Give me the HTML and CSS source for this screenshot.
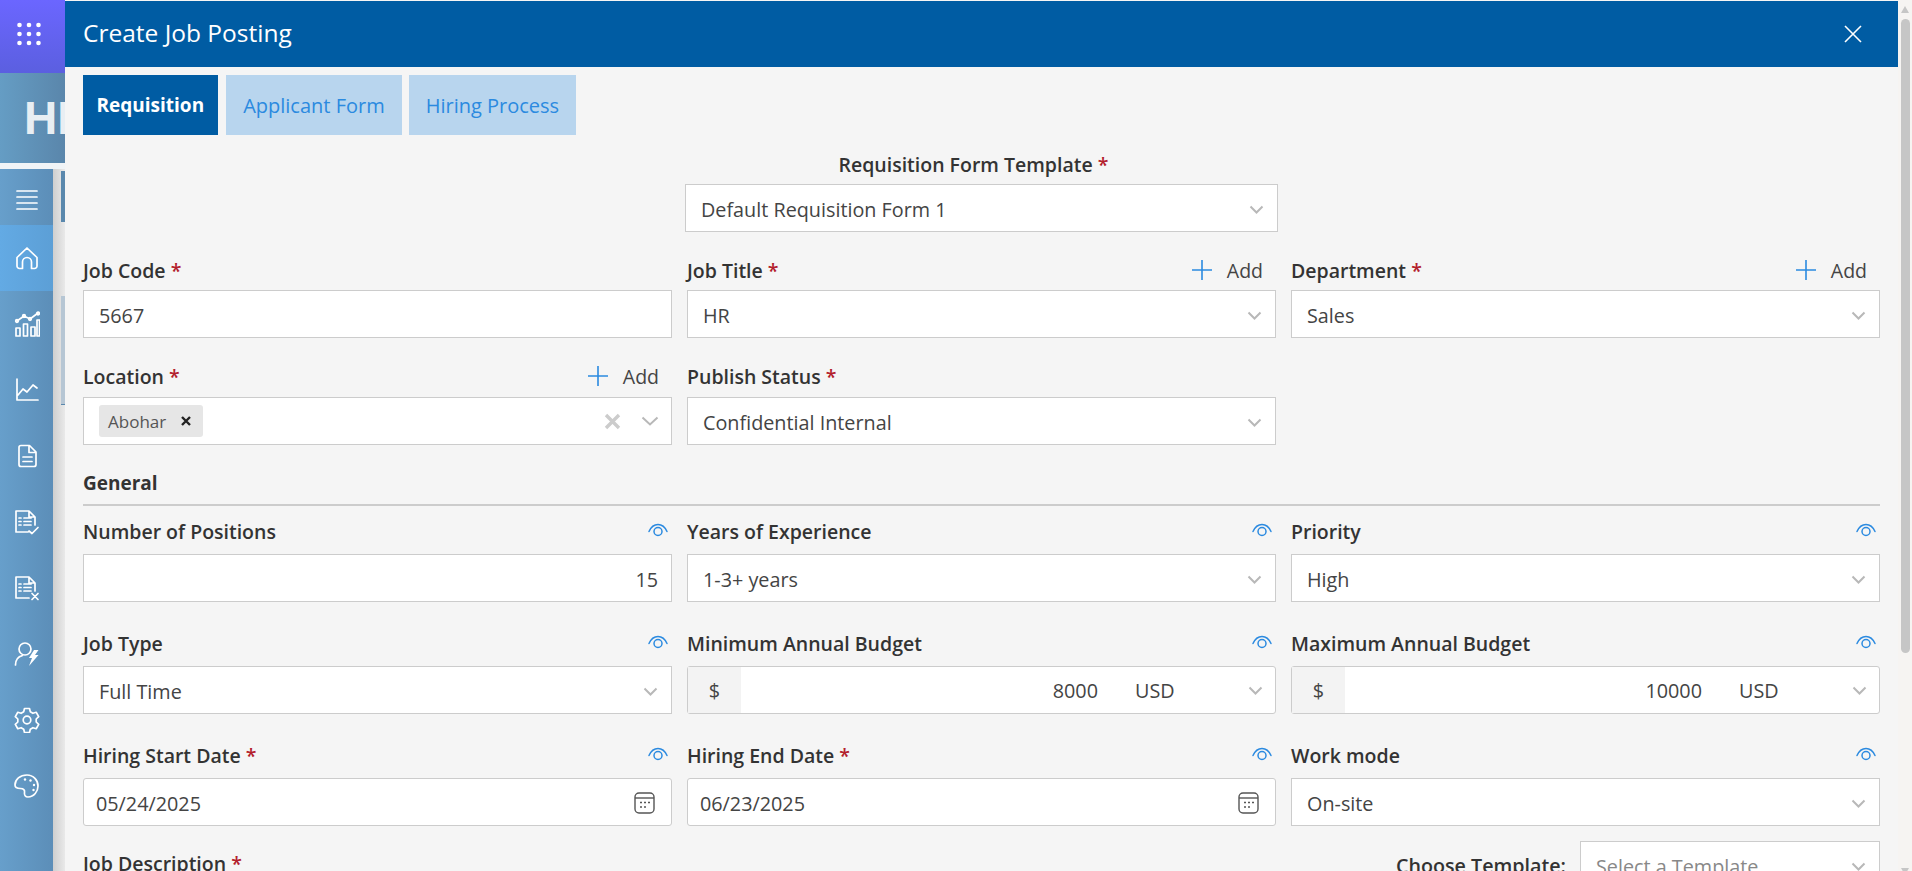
FILE: index.html
```html
<!DOCTYPE html>
<html lang="en">
<head>
    <meta charset="UTF-8">
    <title>Create Job Posting</title>
    <link rel="stylesheet" href="styles.css">
</head>
<body>

<div class="rail">
    <div class="app-tile">
        <svg class="grid-icon" width="24" height="24" viewBox="0 0 24 24" fill="#fff">
            <circle cx="2.500" cy="3" r="2.300"/><circle cx="12" cy="3" r="2.300"/><circle cx="21.500" cy="3" r="2.300"/>
            <circle cx="2.500" cy="12" r="2.300"/><circle cx="12" cy="12" r="2.300"/><circle cx="21.500" cy="12" r="2.300"/>
            <circle cx="2.500" cy="21" r="2.300"/><circle cx="12" cy="21" r="2.300"/><circle cx="21.500" cy="21" r="2.300"/>
        </svg>
    </div>
    <div class="brand"><span class="brand-text">HR</span></div>
    <div class="rail-lower">
        <nav class="side-nav">
            <div class="nav-item nav-menu">
                <svg width="24" height="24" viewBox="0 0 24 24"><path d="M2 3h20M2 9h20M2 15h20M2 21h20"/></svg>
            </div>
            <div class="nav-item active">
                <svg width="26" height="26" viewBox="0 0 26 26"><path d="M3 12.500 13 3l10 9.500V21a2.500 2.500 0 0 1-2.500 2.500H17.500V17a4.500 4.500 0 0 0-9 0v6.500H5.500A2.500 2.500 0 0 1 3 21z"/></svg>
            </div>
            <div class="nav-item">
                <svg width="26" height="26" viewBox="0 0 26 26"><path d="M2 17h4v8H2zM9.500 13h4v12h-4zM17 16h4v9h-4zM23 9h2.500v16H23zM3 10l7-5 6 3 8-6"/><circle cx="3" cy="10" r="1.300"/><circle cx="10" cy="5" r="1.300"/><circle cx="16" cy="8" r="1.300"/><circle cx="24" cy="2.500" r="1.300"/></svg>
            </div>
            <div class="nav-item">
                <svg width="24" height="24" viewBox="0 0 24 24"><path d="M2 1v21h21M3 17l5-6 4 3 6-7 4 3"/></svg>
            </div>
            <div class="nav-item">
                <svg width="24" height="24" viewBox="0 0 24 24"><path d="M6 1.500h8.500L21 8v12.500a2 2 0 0 1-2 2H6a2 2 0 0 1-2-2v-17a2 2 0 0 1 2-2zM14 2v6.500h7M8 13h9M8 17.500h9"/></svg>
            </div>
            <div class="nav-item">
                <svg width="26" height="26" viewBox="0 0 26 26"><path d="M2 2h13l6 6v8M2 2v21h12M15 2v6h6M10 9h7M10 12.500h7M10 16h7M5 9h2M5 12.500h2M5 16h2M15 22l3 2.500 6-6"/></svg>
            </div>
            <div class="nav-item">
                <svg width="26" height="26" viewBox="0 0 26 26"><path d="M2 2h13l6 6v8M2 2v21h13M15 2v6h6M10 9h7M10 12.500h7M10 16h7M5 9h2M5 12.500h2M5 16h2M18 18.500l6 6M24 18.500l-6 6"/></svg>
            </div>
            <div class="nav-item">
                <svg width="26" height="26" viewBox="0 0 26 26"><circle cx="11" cy="8" r="6"/><path d="M1.500 24c0-5 3-8.500 7-9.500"/><path class="solid" d="M20 9h4.500l-3.500 5h3.500L15 25l3-8h-3z"/></svg>
            </div>
            <div class="nav-item">
                <svg width="26" height="26" viewBox="0 0 26 26"><circle cx="13" cy="13" r="3.800"/><path d="M10.500 1.500h5l.8 3.300 2.600 1.500 3.300-1 2.500 4.300-2.500 2.400v3l2.500 2.400-2.500 4.300-3.300-1-2.600 1.500-.8 3.300h-5l-.8-3.300-2.600-1.500-3.300 1-2.500-4.300 2.500-2.400v-3L1.300 9.600l2.500-4.300 3.300 1 2.600-1.500z"/></svg>
            </div>
            <div class="nav-item">
                <svg width="26" height="26" viewBox="0 0 26 26"><path d="M13 2C6 2 1 6.500 1 12c0 3 3 3.500 5.500 3.500 3 0 4.500 1.500 4 4-.5 2.500 1 4.500 3.500 4.500 6 0 10-5.500 10-11S19.500 2 13 2z"/><circle class="solid" cx="11" cy="6.500" r="1.200"/><circle class="solid" cx="16.500" cy="7.500" r="1.200"/><circle class="solid" cx="20" cy="12" r="1.200"/><circle class="solid" cx="19.500" cy="17" r="1.200"/></svg>
            </div>
        </nav>
        <div class="gutter">
            <div class="gutter-dark"></div>
            <div class="gutter-light"></div>
        </div>
    </div>
</div>

<div class="modal">
    <div class="modal-header">
        <span class="modal-title">Create Job Posting</span>
        <svg class="close-icon" width="18" height="18" viewBox="0 0 18 18"><path d="M1 1l16 16M17 1 1 17"/></svg>
    </div>

    <div class="modal-body">
        <div class="tabs">
            <div class="tab current">Requisition</div>
            <div class="tab">Applicant Form</div>
            <div class="tab">Hiring Process</div>
        </div>

        <div class="template-field">
            <div class="template-label">Requisition Form Template <span class="req">*</span></div>
            <div class="control select">
                <span class="value">Default Requisition Form 1</span>
                <svg class="chevron" width="15" height="9" viewBox="0 0 15 9"><path d="M1.500 1.500 7.500 7.500l6-6"/></svg>
            </div>
        </div>

        <div class="form-grid top-grid">
            <div class="field">
                <div class="field-label"><span>Job Code <span class="req">*</span></span></div>
                <div class="control"><span class="value">5667</span></div>
            </div>
            <div class="field">
                <div class="field-label">
                    <span>Job Title <span class="req">*</span></span>
                    <span class="add-link"><svg width="20" height="20" viewBox="0 0 20 20"><path d="M10 0v20M0 10h20"/></svg>Add</span>
                </div>
                <div class="control select">
                    <span class="value">HR</span>
                    <svg class="chevron" width="15" height="9" viewBox="0 0 15 9"><path d="M1.500 1.500 7.500 7.500l6-6"/></svg>
                </div>
            </div>
            <div class="field">
                <div class="field-label">
                    <span>Department <span class="req">*</span></span>
                    <span class="add-link"><svg width="20" height="20" viewBox="0 0 20 20"><path d="M10 0v20M0 10h20"/></svg>Add</span>
                </div>
                <div class="control select">
                    <span class="value">Sales</span>
                    <svg class="chevron" width="15" height="9" viewBox="0 0 15 9"><path d="M1.500 1.500 7.500 7.500l6-6"/></svg>
                </div>
            </div>
            <div class="field">
                <div class="field-label">
                    <span>Location <span class="req">*</span></span>
                    <span class="add-link"><svg width="20" height="20" viewBox="0 0 20 20"><path d="M10 0v20M0 10h20"/></svg>Add</span>
                </div>
                <div class="control select multi">
                    <span class="chip">Abohar<svg class="chip-x" width="10" height="10" viewBox="0 0 10 10"><path d="M1 1l8 8M9 1 1 9"/></svg></span>
                    <svg class="clear-icon" width="17" height="17" viewBox="0 0 17 17"><path d="M2 2l13 13M15 2 2 15"/></svg>
                    <svg class="chevron big" width="18" height="10" viewBox="0 0 18 10"><path d="M1.500 1.500 9 8.500l7.500-7"/></svg>
                </div>
            </div>
            <div class="field">
                <div class="field-label"><span>Publish Status <span class="req">*</span></span></div>
                <div class="control select">
                    <span class="value">Confidential Internal</span>
                    <svg class="chevron" width="15" height="9" viewBox="0 0 15 9"><path d="M1.500 1.500 7.500 7.500l6-6"/></svg>
                </div>
            </div>
        </div>

        <div class="section-title">General</div>

        <div class="form-grid general-grid">
            <div class="field">
                <div class="field-label"><span>Number of Positions</span>
                    <svg class="eye" width="20" height="14" viewBox="0 0 20 14"><path d="M1 8.500C3 4 6 1.500 10 1.500s7 2.500 9 7"/><circle cx="10" cy="8.500" r="4"/></svg>
                </div>
                <div class="control numeric"><span class="value">15</span></div>
            </div>
            <div class="field">
                <div class="field-label"><span>Years of Experience</span>
                    <svg class="eye" width="20" height="14" viewBox="0 0 20 14"><path d="M1 8.500C3 4 6 1.500 10 1.500s7 2.500 9 7"/><circle cx="10" cy="8.500" r="4"/></svg>
                </div>
                <div class="control select">
                    <span class="value">1-3+ years</span>
                    <svg class="chevron" width="15" height="9" viewBox="0 0 15 9"><path d="M1.500 1.500 7.500 7.500l6-6"/></svg>
                </div>
            </div>
            <div class="field">
                <div class="field-label"><span>Priority</span>
                    <svg class="eye" width="20" height="14" viewBox="0 0 20 14"><path d="M1 8.500C3 4 6 1.500 10 1.500s7 2.500 9 7"/><circle cx="10" cy="8.500" r="4"/></svg>
                </div>
                <div class="control select">
                    <span class="value">High</span>
                    <svg class="chevron" width="15" height="9" viewBox="0 0 15 9"><path d="M1.500 1.500 7.500 7.500l6-6"/></svg>
                </div>
            </div>

            <div class="field">
                <div class="field-label"><span>Job Type</span>
                    <svg class="eye" width="20" height="14" viewBox="0 0 20 14"><path d="M1 8.500C3 4 6 1.500 10 1.500s7 2.500 9 7"/><circle cx="10" cy="8.500" r="4"/></svg>
                </div>
                <div class="control select">
                    <span class="value">Full Time</span>
                    <svg class="chevron" width="15" height="9" viewBox="0 0 15 9"><path d="M1.500 1.500 7.500 7.500l6-6"/></svg>
                </div>
            </div>
            <div class="field">
                <div class="field-label"><span>Minimum Annual Budget</span>
                    <svg class="eye" width="20" height="14" viewBox="0 0 20 14"><path d="M1 8.500C3 4 6 1.500 10 1.500s7 2.500 9 7"/><circle cx="10" cy="8.500" r="4"/></svg>
                </div>
                <div class="control budget">
                    <span class="addon">$</span>
                    <span class="amount">8000</span>
                    <span class="currency">USD</span>
                    <svg class="chevron" width="15" height="9" viewBox="0 0 15 9"><path d="M1.500 1.500 7.500 7.500l6-6"/></svg>
                </div>
            </div>
            <div class="field">
                <div class="field-label"><span>Maximum Annual Budget</span>
                    <svg class="eye" width="20" height="14" viewBox="0 0 20 14"><path d="M1 8.500C3 4 6 1.500 10 1.500s7 2.500 9 7"/><circle cx="10" cy="8.500" r="4"/></svg>
                </div>
                <div class="control budget">
                    <span class="addon">$</span>
                    <span class="amount">10000</span>
                    <span class="currency">USD</span>
                    <svg class="chevron" width="15" height="9" viewBox="0 0 15 9"><path d="M1.500 1.500 7.500 7.500l6-6"/></svg>
                </div>
            </div>

            <div class="field">
                <div class="field-label"><span>Hiring Start Date <span class="req">*</span></span>
                    <svg class="eye" width="20" height="14" viewBox="0 0 20 14"><path d="M1 8.500C3 4 6 1.500 10 1.500s7 2.500 9 7"/><circle cx="10" cy="8.500" r="4"/></svg>
                </div>
                <div class="control date">
                    <span class="value">05/24/2025</span>
                    <svg class="calendar" width="21" height="22" viewBox="0 0 21 22"><rect x="1" y="1" width="19" height="20" rx="4"/><path d="M1 6h19"/><path class="dots" d="M6 10.500h2M10 10.500h2M14 10.500h2M6 15h2M10 15h2"/></svg>
                </div>
            </div>
            <div class="field">
                <div class="field-label"><span>Hiring End Date <span class="req">*</span></span>
                    <svg class="eye" width="20" height="14" viewBox="0 0 20 14"><path d="M1 8.500C3 4 6 1.500 10 1.500s7 2.500 9 7"/><circle cx="10" cy="8.500" r="4"/></svg>
                </div>
                <div class="control date">
                    <span class="value">06/23/2025</span>
                    <svg class="calendar" width="21" height="22" viewBox="0 0 21 22"><rect x="1" y="1" width="19" height="20" rx="4"/><path d="M1 6h19"/><path class="dots" d="M6 10.500h2M10 10.500h2M14 10.500h2M6 15h2M10 15h2"/></svg>
                </div>
            </div>
            <div class="field">
                <div class="field-label"><span>Work mode</span>
                    <svg class="eye" width="20" height="14" viewBox="0 0 20 14"><path d="M1 8.500C3 4 6 1.500 10 1.500s7 2.500 9 7"/><circle cx="10" cy="8.500" r="4"/></svg>
                </div>
                <div class="control select">
                    <span class="value">On-site</span>
                    <svg class="chevron" width="15" height="9" viewBox="0 0 15 9"><path d="M1.500 1.500 7.500 7.500l6-6"/></svg>
                </div>
            </div>
        </div>

        <div class="description-row">
            <div class="description-label">Job Description <span class="req">*</span></div>
            <div class="template-picker">
                <span class="picker-label">Choose Template:</span>
                <div class="control select picker">
                    <span class="value placeholder">Select a Template</span>
                    <svg class="chevron" width="15" height="9" viewBox="0 0 15 9"><path d="M1.500 1.500 7.500 7.500l6-6"/></svg>
                </div>
            </div>
        </div>
    </div>
</div>

<div class="scrollbar">
    <span class="arrow-up"></span>
    <div class="thumb"></div>
    <span class="arrow-down"></span>
</div>

</body>
</html>
```

FILE: styles.css
```css
* {
    box-sizing: border-box;
}

html, body {
    margin: 0;
    height: 871px;
    overflow: hidden;
}

body {
    position: relative;
    background-color: #f5f5f5;
    font-family: "Open Sans", "Noto Sans", sans-serif;
    color: #333;
}

/* page behind the modal */
.rail {
    width: 65px;
    height: 871px;
    display: flex;
    flex-direction: column;
}

.app-tile {
    height: 73px;
    background: linear-gradient(180deg, #6b66ff, #5b5fe0);
    display: flex;
    align-items: center;
    justify-content: center;
}

.grid-icon {
    margin-top: -5px;
    margin-left: -7px;
}

.brand {
    height: 90px;
    background: linear-gradient(90deg, #659dc4, #5a86ab);
    overflow: hidden;
    display: flex;
    align-items: center;
    padding-left: 24px;
}

.brand-text {
    font-family: "Liberation Sans", sans-serif;
    font-weight: 700;
    font-size: 46px;
    color: #e8eef3;
}

.rail-lower {
    flex: 1;
    margin-top: 6px;
    display: flex;
    box-shadow: 0 -6px 0 #f0f4f7;
}

.side-nav {
    width: 53px;
    background: linear-gradient(90deg, #679fcb, #5c8eb8);
}

.nav-item {
    height: 66px;
    display: flex;
    align-items: center;
    justify-content: center;
}

.nav-item svg {
    fill: none;
    stroke: #fff;
    stroke-width: 1.7;
    stroke-linejoin: round;
    stroke-linecap: round;
}

.nav-item svg .solid {
    fill: #fff;
    stroke: none;
}

.nav-menu {
    height: 56px;
    padding-top: 6px;
}

.nav-item.active {
    background: linear-gradient(90deg, #63aae4, #5c9fd6);
}

.gutter {
    flex: 1;
    background: linear-gradient(90deg, #cfcfcf, #e9e9e9);
    padding-top: 2px;
    padding-left: 8px;
}

.gutter-dark {
    height: 51px;
    background-color: #5a88ad;
}

.gutter-light {
    height: 109px;
    margin-top: 74px;
    background-color: #b6c6d4;
    border-bottom: 1px solid #5a88ad;
}

/* modal */
.modal {
    position: absolute;
    left: 65px;
    top: 1px;
    width: 1833px;
    height: 870px;
    background-color: #f5f5f5;
    overflow: hidden;
}

.modal-header {
    height: 66px;
    background-color: #005ca3;
    color: #fff;
    display: flex;
    align-items: center;
    justify-content: space-between;
    padding: 0 36px 0 18px;
}

.modal-title {
    font-size: 24.5px;
    padding-bottom: 4px;
}

.close-icon {
    fill: none;
    stroke: #fff;
    stroke-width: 1.6;
}

.modal-body {
    padding: 8px 18px 0 18px;
}

.tabs {
    display: flex;
    gap: 7px;
}

.tab {
    height: 60px;
    padding: 0 17px;
    display: flex;
    align-items: center;
    font-size: 20px;
    background-color: #b8d5ee;
    color: #2b8ae0;
}

.tab.current {
    background-color: #005ca3;
    color: #fff;
    font-size: 19px;
    font-weight: 700;
    padding: 0 13.5px;
    margin-right: 1.5px;
}

.template-field {
    width: 593px;
    margin: 18px auto 0;
}

.template-label {
    text-align: center;
    padding-right: 16px;
    font-size: 19.5px;
    font-weight: 600;
    line-height: 24px;
    margin-bottom: 7px;
}

.req {
    color: #b3202c;
}

.form-grid {
    display: grid;
    grid-template-columns: repeat(3, 589px);
    column-gap: 15px;
}

.top-grid {
    margin-top: 26px;
    row-gap: 26px;
}

.general-grid {
    margin-top: 13px;
    row-gap: 29px;
}

.field-label {
    height: 24px;
    margin-bottom: 8px;
    display: flex;
    align-items: center;
    justify-content: space-between;
    font-size: 19.5px;
    font-weight: 600;
}

.top-grid .field:nth-child(n+4) .field-label {
    margin-bottom: 9px;
}

.general-grid .field-label {
    margin-bottom: 11px;
}

.add-link {
    display: flex;
    align-items: center;
    gap: 15px;
    padding-right: 13px;
    font-weight: 400;
    font-size: 19.5px;
    color: #444;
}

.add-link svg {
    fill: none;
    stroke: #2b8ae0;
    stroke-width: 1.6;
}

.eye {
    margin-right: 4px;
    margin-bottom: 2px;
    fill: none;
    stroke: #2b8ae0;
    stroke-width: 1.5;
    stroke-linecap: round;
}

.control {
    height: 48px;
    background-color: #fff;
    border: 1px solid #ccc;
    display: flex;
    align-items: center;
    padding: 2px 13px 0 15px;
    font-size: 19.8px;
    color: #444;
}

.select {
    justify-content: space-between;
}

.chevron {
    fill: none;
    stroke: #b8b8b8;
    stroke-width: 2;
    flex: none;
}

.multi {
    padding: 0 12px 0 15px;
}

.chip {
    height: 32px;
    padding: 0 12px 0 9px;
    display: flex;
    align-items: center;
    gap: 15px;
    background-color: #e6e6e6;
    border-radius: 3px;
    font-size: 17px;
    color: #555;
}

.chip-x {
    fill: none;
    stroke: #222;
    stroke-width: 2.4;
}

.clear-icon {
    margin-left: auto;
    margin-right: 20px;
    fill: none;
    stroke: #ccc;
    stroke-width: 3.4;
}

.numeric {
    justify-content: flex-end;
}

.budget {
    padding: 0 12px 0 0;
    border-radius: 3px;
}

.addon {
    width: 53px;
    height: 100%;
    background-color: #f3f3f3;
    display: flex;
    align-items: center;
    justify-content: center;
    flex: none;
}

.amount {
    flex: 1;
    text-align: right;
}

.currency {
    width: 150px;
    padding-left: 37px;
    flex: none;
}

.date {
    justify-content: space-between;
    border-radius: 3px;
    padding-left: 12px;
    padding-right: 16px;
}

.calendar {
    fill: none;
    stroke: #555;
    stroke-width: 1.4;
}

.section-title {
    margin-top: 26px;
    height: 35px;
    padding-bottom: 9px;
    border-bottom: 2px solid #ccc;
    font-size: 19px;
    font-weight: 700;
    line-height: 24px;
}

.description-row {
    margin-top: 15px;
    display: flex;
    align-items: center;
    justify-content: space-between;
}

.description-label {
    margin-bottom: 4px;
    font-size: 19.5px;
    font-weight: 600;
}

.template-picker {
    display: flex;
    align-items: center;
    gap: 14px;
}

.picker-label {
    font-size: 19.7px;
    font-weight: 600;
}

.picker {
    width: 300px;
}

.placeholder {
    color: #888;
}

/* browser scrollbar */
.scrollbar {
    position: absolute;
    right: 0;
    top: 0;
    bottom: 0;
    width: 14px;
    background-color: #f6f4f2;
}

.thumb {
    position: absolute;
    left: 3px;
    top: 19px;
    width: 9px;
    height: 634px;
    border-radius: 4.5px;
    background-color: #c6c6c6;
}

.arrow-up, .arrow-down {
    position: absolute;
    left: 3px;
    width: 0;
    height: 0;
    border-left: 4.500px solid transparent;
    border-right: 4.500px solid transparent;
}

.arrow-up {
    top: 6px;
    border-bottom: 7px solid #c6c6c6;
}

.arrow-down {
    bottom: -4px;
    border-top: 7px solid #c6c6c6;
}
```
